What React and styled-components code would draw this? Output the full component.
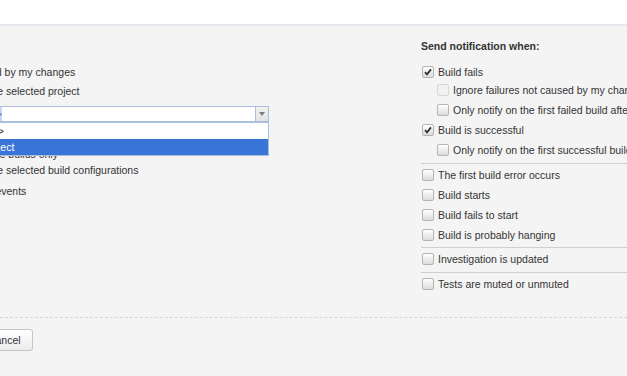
import styled, { createGlobalStyle } from 'styled-components';

const GlobalStyle = createGlobalStyle`
  html, body {
    margin: 0;
    background: #f4f4f4;
    overflow: hidden;
  }
  body {
    font-family: "Liberation Sans", Arial, sans-serif;
    font-size: 10.5px;
    color: #333;
  }
`;

const TopBar = styled.div`
  height: 24px;
  background: #fff;
  border-bottom: 2px solid #e4e8ed;
`;

const Content = styled.div`
  display: flex;
  margin-left: -91px;
  padding: 10px 0 23px;
`;

const LeftColumn = styled.div`
  width: 512px;
  flex-shrink: 0;
  padding-top: 26px;
`;

const RightColumn = styled.div`
  flex: 1;
  min-width: 0;
  overflow: hidden;
`;

const Choice = styled.label`
  display: flex;
  align-items: center;
  height: ${(p) => p.$h || 20}px;
  margin-top: ${(p) => p.$mt || 0}px;
  white-space: nowrap;
`;

const Radio = styled.span`
  width: 11px;
  height: 11px;
  border: 1px solid #aaa;
  border-radius: 50%;
  background: #fff;
  margin-right: 11px;
  flex-shrink: 0;
`;

const Combo = styled.div`
  position: relative;
  display: flex;
  width: 338px;
  height: 16px;
  margin: 5px 0 0 22px;
  box-sizing: border-box;
  border: 1px solid #a9bfdc;
  background: #fff;
`;

const ComboInput = styled.div`
  flex: 1;
  display: flex;
  align-items: center;
  padding-left: 1px;
  line-height: 14px;
`;

const Typed = styled.span`
  background: #c5d7f2;
  color: #5a7fc0;
`;

const ComboArrow = styled.div`
  width: 12px;
  display: flex;
  align-items: center;
  justify-content: center;
  border-left: 1px solid #a9bfdc;
  background: linear-gradient(#f2f2f2, #e2e2e2);

  &::after {
    content: '';
    border-left: 3.5px solid transparent;
    border-right: 3.5px solid transparent;
    border-top: 4px solid #7a7a7a;
  }
`;

const OptionList = styled.div`
  position: absolute;
  top: 15px;
  left: -1px;
  right: -1px;
  border: 1px solid #a9bfdc;
  background: #fff;
  z-index: 2;
`;

const Option = styled.div`
  height: 16px;
  line-height: 16px;
  padding-left: 3px;
  white-space: nowrap;
  background: ${(p) => (p.$selected ? '#3875d7' : '#fff')};
  color: ${(p) => (p.$selected ? '#fff' : '#333')};
`;

const Heading = styled.div`
  font-weight: bold;
  line-height: 20px;
  margin-bottom: 6px;
  white-space: nowrap;
`;

const CheckRow = styled.label`
  display: flex;
  align-items: center;
  height: 20px;
  padding-left: ${(p) => (p.$nested ? 16 : 1)}px;
  margin-top: ${(p) => p.$mt || 0}px;
  white-space: nowrap;
`;

const Box = styled.span`
  width: 10px;
  height: 10px;
  border: 1px solid ${(p) => (p.$disabled ? '#d8d8d8' : '#b4b4b4')};
  border-radius: 2px;
  background: ${(p) =>
    p.$disabled ? '#f1f1f1' : 'linear-gradient(#ffffff, #dcdcdc)'};
  margin-right: 4px;
  flex-shrink: 0;
  display: flex;
  align-items: center;
  justify-content: center;
`;

const Divider = styled.div`
  height: 1px;
  background: #cfcfcf;
  margin: ${(p) => p.$m};
`;

const Footer = styled.div`
  border-top: 1px dashed #d6d6d6;
  padding-top: 11px;
`;

const ButtonRow = styled.div`
  display: flex;
  gap: 6px;
  margin-left: -78px;
`;

const Button = styled.button`
  height: 22px;
  padding: 0 11px;
  border: 1px solid #c6c6c6;
  border-radius: 3px;
  background: linear-gradient(#ffffff, #ececec);
  font-family: inherit;
  font-size: 10.5px;
  color: #333;
`;

const Check = ({ checked, disabled }) => (
  <Box $disabled={disabled}>
    {checked && (
      <svg width="8" height="8" viewBox="0 0 8 8">
        <path d="M1 4.2 L3 6.3 L7 1.4" fill="none" stroke="#333" strokeWidth="1.8" />
      </svg>
    )}
  </Box>
);

const rules = [
  { text: 'Build fails', checked: true },
  { text: 'Ignore failures not caused by my changes', nested: true, disabled: true, mt: -2 },
  { text: 'Only notify on the first failed build after successful', nested: true },
  { text: 'Build is successful', checked: true },
  { text: 'Only notify on the first successful build after failed', nested: true },
  { divider: '3px 0 1px' },
  { text: 'The first build error occurs' },
  { text: 'Build starts' },
  { text: 'Build fails to start' },
  { text: 'Build is probably hanging' },
  { divider: '2px 0 1px' },
  { text: 'Investigation is updated' },
  { divider: '3px 0 1px' },
  { text: 'Tests are muted or unmuted' },
];

const App = () => (
  <>
    <GlobalStyle />
    <TopBar />
    <Content>
      <LeftColumn>
        <Choice>
          <Radio />
          Builds affected by my changes
        </Choice>
        <Choice $mt={-1}>
          <Radio />
          Builds from the selected project
        </Choice>
        <Combo>
          <ComboInput>
            <Typed>&lt;Root project&gt;</Typed>
          </ComboInput>
          <ComboArrow />
          <OptionList>
            <Option>&lt;Root project&gt;</Option>
            <Option $selected>TeamCity Project</Option>
          </OptionList>
        </Combo>
        <Choice $h={16} $mt={24}>
          <Radio />
          Include inactive builds only
        </Choice>
        <Choice $h={16}>
          <Radio />
          Builds from the selected build configurations
        </Choice>
        <Choice $mt={3}>
          <Radio />
          System wide events
        </Choice>
      </LeftColumn>
      <RightColumn>
        <Heading>Send notification when:</Heading>
        {rules.map((r, i) =>
          r.divider ? (
            <Divider key={i} $m={r.divider} />
          ) : (
            <CheckRow key={i} $nested={r.nested} $mt={r.mt}>
              <Check checked={r.checked} disabled={r.disabled} />
              {r.text}
            </CheckRow>
          )
        )}
      </RightColumn>
    </Content>
    <Footer>
      <ButtonRow>
        <Button>Save</Button>
        <Button>Cancel</Button>
      </ButtonRow>
    </Footer>
  </>
);

export default App;
